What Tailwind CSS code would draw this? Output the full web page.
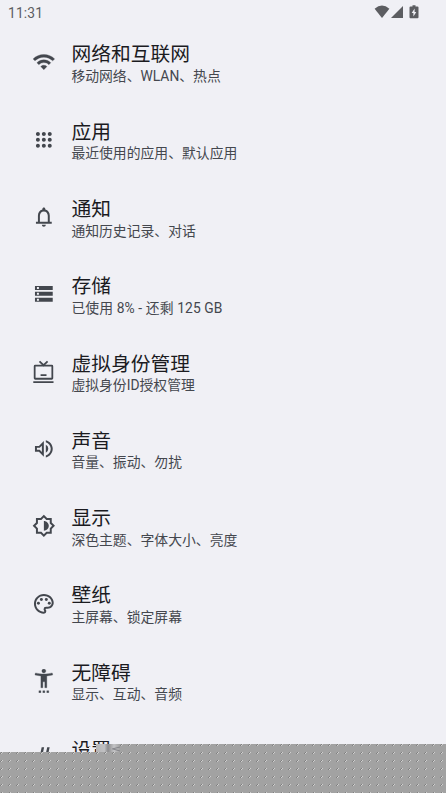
<!DOCTYPE html>
<html lang="zh-CN">
<head>
<meta charset="utf-8">
<title>设置</title>
<script src="https://cdn.jsdelivr.net/npm/@tailwindcss/browser@4"></script>
</head>
<body class="bg-[#f0f0f5] overflow-hidden font-[Roboto,'Noto_Sans_CJK_SC',sans-serif]">
<div class="relative w-[446px] h-[793px] overflow-hidden">
  <header class="flex h-[23.7px] items-center justify-between pl-2 pr-[27px] text-[#5c5d61]">
    <span class="text-[13.8px] leading-none pt-[4px] tracking-[0.15px]">11:31</span>
    <svg class="w-[46px] h-[18px]" viewBox="0 0 46 18" fill="currentColor">
      <path d="M1.600 5.700Q9-.9 16.400 5.700L9 15Z"/>
      <path d="M18 15H30V3Z"/>
      <path fill-rule="evenodd" d="M39.500 2.200h3v1.300h2q1 0 1 1v9.700q0 1-1 1h-7q-1 0-1-1V4.500q0-1 1-1h2ZM41.600 5.500L38.700 10h1.700v3.500L43.300 8.900h-1.700Z"/>
    </svg>
  </header>
  <main id="list" class="flex flex-col"></main>
  <div class="absolute left-0 top-[744px] w-[446px] h-[49px]">
    <svg class="block" width="446" height="49" viewBox="0 0 446 49">
      <defs>
        <linearGradient id="smear"><stop offset="0" stop-color="#b5b5b7"/><stop offset=".35" stop-color="#c0c0c2"/><stop offset=".5" stop-color="#8c8c8e"/><stop offset=".75" stop-color="#c4c4c6"/><stop offset="1" stop-color="#a2a2a2"/></linearGradient>
      </defs>
      <path d="M120 0H446V49H0V8H120Z" fill="#a2a2a2"/>
      <g id="noise"></g>
      <rect x="96" y="0" width="24" height="8" fill="url(#smear)"/>
      <path d="M89 3h2v2h-2zM90 6h3v2h-3z" fill="#f0f0f5"/>
      <path d="M112 5l8-2M113 5l7 2" stroke="#85858a" fill="none"/>
    </svg>
  </div>
</div>
<script>
const icons = {
  wifi: '<g transform="translate(1.080 .9) scale(.91)" stroke="currentColor" stroke-width=".35"><path d="M12 4C7.310 4 3.070 5.900 0 8.980l2.120 2.120C4.650 8.570 8.140 7 12 7s7.350 1.570 9.880 4.100L24 8.980C20.930 5.900 16.690 4 12 4z"/><path d="M12 10c-3 0-5.750 1.220-7.720 3.200l2.120 2.120A7.900 7.900 0 0 1 12 13c2.200 0 4.180.89 5.610 2.320l2.120-2.120C17.750 11.220 15 10 12 10zM12 16c-1.350 0-2.570.55-3.450 1.440L12 20.900l3.450-3.460A4.860 4.860 0 0 0 12 16z"/></g>',
  apps: '<path d="M6 8c1.100 0 2-.9 2-2s-.9-2-2-2-2 .9-2 2 .9 2 2 2zm6 12c1.100 0 2-.9 2-2s-.9-2-2-2-2 .9-2 2 .9 2 2 2zm-6 0c1.100 0 2-.9 2-2s-.9-2-2-2-2 .9-2 2 .9 2 2 2zm0-6c1.100 0 2-.9 2-2s-.9-2-2-2-2 .9-2 2 .9 2 2 2zm6 0c1.100 0 2-.9 2-2s-.9-2-2-2-2 .9-2 2 .9 2 2 2zm4-8c0 1.100.9 2 2 2s2-.9 2-2-.9-2-2-2-2 .9-2 2zm-4 2c1.100 0 2-.9 2-2s-.9-2-2-2-2 .9-2 2 .9 2 2 2zm6 6c1.100 0 2-.9 2-2s-.9-2-2-2-2 .9-2 2 .9 2 2 2zm0 6c1.100 0 2-.9 2-2s-.9-2-2-2-2 .9-2 2 .9 2 2 2z"/>',
  bell: '<path d="M18 17v-6c0-3.070-1.630-5.640-4.500-6.320V4c0-.83-.67-1.500-1.500-1.500s-1.500.67-1.500 1.500v.68C7.640 5.360 6 7.920 6 11v6H4v2h16v-2h-2zm-2 0H8v-6c0-2.480 1.510-4.500 4-4.500s4 2.020 4 4.500v6zm-4 5c1.100 0 2-.9 2-2h-4c0 1.100.9 2 2 2z"/>',
  storage: '<path fill-rule="evenodd" d="M3 20h18v-4H3v4zm2-3h2v2H5v-2zM3 4v4h18V4H3zm4 3H5V5h2v2zm-4 7h18v-4H3v4zm2-3h2v2H5v-2z"/>',
  identity: '<g fill="none" stroke="currentColor" stroke-width="1.800"><rect x="2.700" y="5.700" width="17.900" height="13.300" rx=".6"/><path d="M7.600 1.300l4.100 4 4.100-4M8.700 15.300h6M1.300 22.500h20.500"/></g>',
  sound: '<path d="M3 9v6h4l5 5V4L7 9H3zm7-.17v6.340L7.830 13H5v-2h2.830L10 8.830zM16.500 12A4.500 4.500 0 0 0 14 7.970v8.050A4.470 4.470 0 0 0 16.500 12zM14 3.230v2.060c2.890.86 5 3.540 5 6.710s-2.110 5.850-5 6.710v2.060c4.010-.91 7-4.490 7-8.770s-2.990-7.860-7-8.770z"/>',
  display: '<path d="M20 15.310L23.310 12 20 8.690V4h-4.690L12 .69 8.690 4H4v4.690L.69 12 4 15.310V20h4.690L12 23.310 15.310 20H20v-4.690zm-2 -.83V18h-3.520L12 20.480 9.520 18H6v-3.520L3.520 12 6 9.520V6h3.520L12 3.520 14.480 6H18v3.520L20.480 12 18 14.480z"/><path d="M12 7v10c2.760 0 5-2.240 5-5s-2.240-5-5-5z"/>',
  palette: '<path d="M12 22C6.490 22 2 17.510 2 12S6.490 2 12 2s10 4.040 10 9c0 3.310-2.690 6-6 6h-1.770c-.28 0-.5.22-.5.5 0 .12.050.23.130.33.410.47.640 1.060.640 1.670A2.500 2.500 0 0 1 12 22zm0-18c-4.410 0-8 3.590-8 8s3.590 8 8 8c.28 0 .5-.22.5-.5a.54.54 0 0 0-.14-.35c-.41-.46-.63-1.050-.63-1.650a2.500 2.500 0 0 1 2.500-2.500H16c2.210 0 4-1.790 4-4 0-3.860-3.590-7-8-7z"/><circle cx="6.500" cy="11.500" r="1.500"/><circle cx="9.500" cy="7.500" r="1.500"/><circle cx="14.500" cy="7.500" r="1.500"/><circle cx="17.500" cy="11.500" r="1.500"/>',
  access: '<path d="M20.500 4l.5 2c-1.860.5-4 .83-6 1v12h-2v-6h-2v6H9V7c-2-.17-4.140-.5-6-1l.5-2c2.610.7 5.670 1 8.500 1s5.890-.3 8.500-1zM12 4c1.100 0 2-.9 2-2s-.9-2-2-2-2 .9-2 2 .9 2 2 2zM7 24h2v-2H7v2zm4 0h2v-2h-2v2zm4 0h2v-2h-2v2z" stroke="currentColor" stroke-width=".3"/>',
  hash: '<path d="M9.800 1.200h2.500L10.800 8H8.300zM15.400 1.200h2.500L16.400 8h-2.500z"/>'
};
const rows = [
  ['wifi', '网络和互联网', '移动网络、WLAN、热点'],
  ['apps', '应用', '最近使用的应用、默认应用'],
  ['bell', '通知', '通知历史记录、对话'],
  ['storage', '存储', '<span class="tracking-[0.1px]">已使用 8% - 还剩 125 GB</span>'],
  ['identity', '虚拟身份管理', '虚拟身份ID授权管理'],
  ['sound', '声音', '音量、振动、勿扰'],
  ['display', '显示', '深色主题、字体大小、亮度'],
  ['palette', '壁纸', '主屏幕、锁定屏幕'],
  ['access', '无障碍', '显示、互动、音频'],
  ['hash', '设置', '']
];
document.getElementById('list').innerHTML = rows.map(([icon, title, sub]) => `
  <div class="flex h-[77.3px] shrink-0 items-center pl-[31.6px] gap-[16.1px]">
    <svg class="w-[23.7px] h-[23.7px] shrink-0 text-[#43474e]" viewBox="0 0 24 24" fill="currentColor">${icons[icon]}</svg>
    <div class="whitespace-nowrap pt-[3.6px]">
      <div class="h-[23.6px] text-[19.75px] leading-[25px] text-[#1b1b1f]">${title}</div>
      <div class="h-[20px] text-[13.83px] leading-[20px] text-[#44474e]">${sub}</div>
    </div>
  </div>`).join('');

// Speckle repeated on an 8px grid over the grey strip
let dark = '', light = '';
for (let y = 0; y < 49; y += 8) {
  for (let x = y === 0 ? 120 : 0; x < 446; x += 8) {
    dark += `M${x + 1} ${y}h1v1h-1zM${x} ${y + 1}h1v1h-1z`;
    light += `M${x + 2} ${y}h1v1h-1zM${x + 1} ${y + 1}h1v1h-1z`;
  }
}
document.getElementById('noise').innerHTML =
  `<path fill="#808080" d="${dark}"/><path fill="#cecece" d="${light}"/>`;
</script>
</body>
</html>
